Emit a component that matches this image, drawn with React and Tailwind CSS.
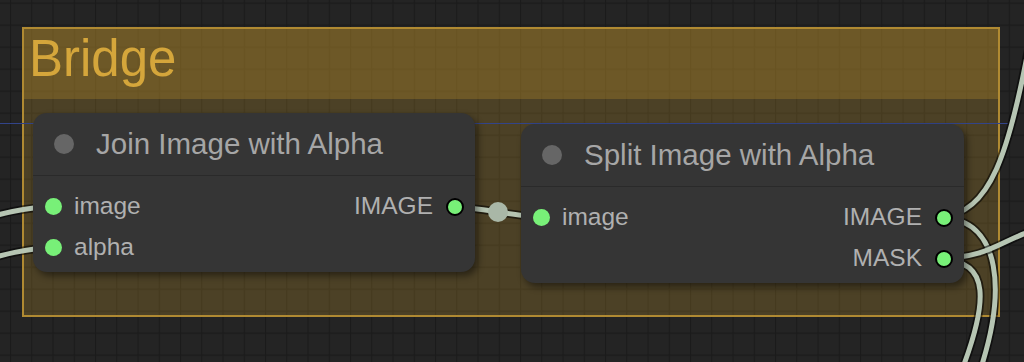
import React from "react";

const GREEN = "#78f078";

const nodes = [
  {
    id: "join",
    title: "Join Image with Alpha",
    pos: "left-[33px] top-[113px] w-[442px]",
    rows: [
      { input: "image", output: "IMAGE" },
      { input: "alpha", output: null },
    ],
  },
  {
    id: "split",
    title: "Split Image with Alpha",
    pos: "left-[521px] top-[124px] w-[443px]",
    rows: [
      { input: "image", output: "IMAGE" },
      { input: null, output: "MASK" },
    ],
  },
];

// link paths in canvas pixels
const links = [
  "M-40,225 C-10,217 20,207 53,207",
  "M-40,267 C-10,259 20,248 53,248",
  "M455,207 C477,207 519,217 541,217",
  "M941,216 C990,216 1010,150 1030,40",
  "M941,218 C1000,218 1010,290 975,385",
  "M941,258 C990,258 1000,240 1040,228",
  "M941,260 C990,260 990,300 958,380",
];

const GridLayer = () => (
  <svg className="absolute inset-0" width="1024" height="362">
    <defs>
      <pattern id="minor" x="10" y="2.5" width="21.25" height="22" patternUnits="userSpaceOnUse">
        <path d="M0 0.5 H21.25 M0.5 0 V22" stroke="#1b1b1b" strokeWidth="1.3" fill="none" />
      </pattern>
    </defs>
    <rect width="1024" height="362" fill="url(#minor)" />
  </svg>
);

const LinkLayer = () => (
  <svg className="absolute inset-0" width="1024" height="362">
    <line x1="0" y1="123.5" x2="1008" y2="123.5" stroke="#32448a" strokeWidth="1.2" />
    {links.map((d, i) => (
      <g key={i}>
        <path d={d} stroke="rgba(0,0,0,0.55)" strokeWidth="8.5" fill="none" />
        <path d={d} stroke="#b6c5b3" strokeWidth="5" fill="none" />
      </g>
    ))}
    <circle cx="498" cy="212" r="10" fill="#a9b7a7" />
  </svg>
);

const Node = ({ title, pos, rows }) => (
  <div className={`absolute ${pos} rounded-[14px] bg-[#353535] shadow-[3px_4px_7px_rgba(0,0,0,0.45)] flex flex-col`}>
    <div className="h-[63px] flex items-center pl-[21px] border-b border-[#2a2a2a]">
      <div className="w-[20px] h-[20px] rounded-full bg-[#666666]" />
      <span className="ml-[22px] text-[29.5px] leading-[29.5px] text-[#a6a6a6]">{title}</span>
    </div>
    <div className="pt-[10px] pb-[4px] flex flex-col">
      {rows.map((r, i) => (
        <div key={i} className="h-[41px] flex items-center justify-between pl-[12px] pr-[11px]">
          <div className="flex items-center">
            {r.input && (
              <>
                <div className="w-[17px] h-[17px] rounded-full" style={{ background: GREEN }} />
                <span className="ml-[12px] text-[24.5px] leading-[24.5px] text-[#b0b0b0]">{r.input}</span>
              </>
            )}
          </div>
          <div className="flex items-center">
            {r.output && (
              <>
                <span className="mr-[13px] text-[24.5px] leading-[24.5px] text-[#b0b0b0]">{r.output}</span>
                <div className="w-[18px] h-[18px] rounded-full border-2 border-black" style={{ background: GREEN }} />
              </>
            )}
          </div>
        </div>
      ))}
    </div>
  </div>
);

export default function App() {
  return (
    <div className="relative w-[1024px] h-[362px] overflow-hidden bg-[#242424] font-['Liberation_Sans',Arial,sans-serif]">
      <GridLayer />

      {/* group */}
      <div className="absolute left-[22px] top-[27px] w-[978px] h-[290px] border-2 border-[#b08a32] flex flex-col">
        <div className="h-[70px] bg-[rgba(181,139,42,0.5)] pl-[5px] pt-[4px] text-[51px] leading-[51px] text-[#d5a63b]">
          Bridge
        </div>
        <div className="flex-1 bg-[rgba(181,139,42,0.28)]" />
      </div>

      <LinkLayer />

      {nodes.map((n) => (
        <Node key={n.id} {...n} />
      ))}
    </div>
  );
}
